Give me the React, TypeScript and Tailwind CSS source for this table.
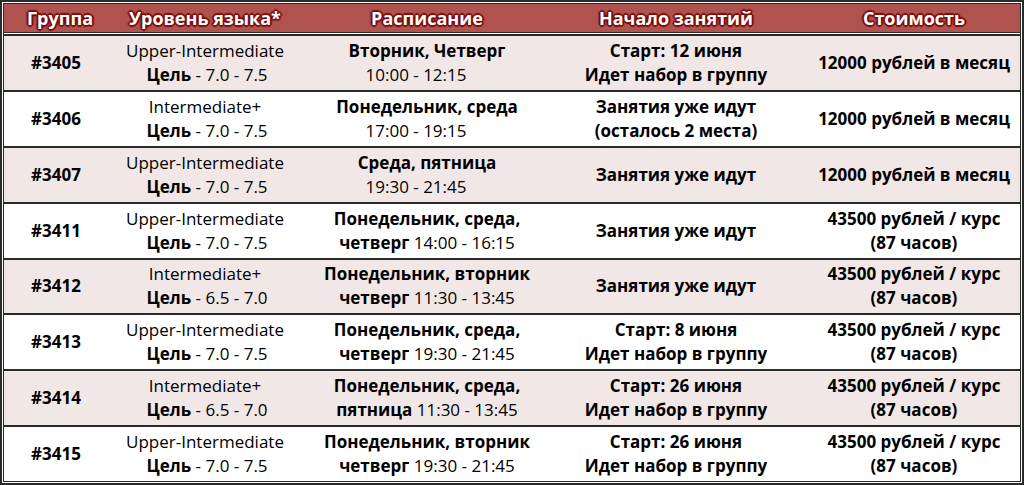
import React from "react";

type Row = {
  id: string;
  level: string;
  goal: string;
  days: string;
  dayWord?: string;
  time: string;
  start: string[];
  price: string[];
};

const rows: Row[] = [
  { id: "#3405", level: "Upper-Intermediate", goal: "7.0 - 7.5", days: "Вторник, Четверг", time: "10:00 - 12:15", start: ["Старт: 12 июня", "Идет набор в группу"], price: ["12000 рублей в месяц"] },
  { id: "#3406", level: "Intermediate+", goal: "7.0 - 7.5", days: "Понедельник, среда", time: "17:00 - 19:15", start: ["Занятия уже идут", "(осталось 2 места)"], price: ["12000 рублей в месяц"] },
  { id: "#3407", level: "Upper-Intermediate", goal: "7.0 - 7.5", days: "Среда, пятница", time: "19:30 - 21:45", start: ["Занятия уже идут"], price: ["12000 рублей в месяц"] },
  { id: "#3411", level: "Upper-Intermediate", goal: "7.0 - 7.5", days: "Понедельник, среда,", dayWord: "четверг", time: "14:00 - 16:15", start: ["Занятия уже идут"], price: ["43500 рублей / курс", "(87 часов)"] },
  { id: "#3412", level: "Intermediate+", goal: "6.5 - 7.0", days: "Понедельник, вторник", dayWord: "четверг", time: "11:30 - 13:45", start: ["Занятия уже идут"], price: ["43500 рублей / курс", "(87 часов)"] },
  { id: "#3413", level: "Upper-Intermediate", goal: "7.0 - 7.5", days: "Понедельник, среда,", dayWord: "четверг", time: "19:30 - 21:45", start: ["Старт: 8 июня", "Идет набор в группу"], price: ["43500 рублей / курс", "(87 часов)"] },
  { id: "#3414", level: "Intermediate+", goal: "6.5 - 7.0", days: "Понедельник, среда,", dayWord: "пятница", time: "11:30 - 13:45", start: ["Старт: 26 июня", "Идет набор в группу"], price: ["43500 рублей / курс", "(87 часов)"] },
  { id: "#3415", level: "Upper-Intermediate", goal: "7.0 - 7.5", days: "Понедельник, вторник", dayWord: "четверг", time: "19:30 - 21:45", start: ["Старт: 26 июня", "Идет набор в группу"], price: ["43500 рублей / курс", "(87 часов)"] },
];

const head =
  "text-white font-bold text-[18px] [text-shadow:1px_0_0_#7d0c0c,-1px_0_0_#7d0c0c,0_1px_0_#7d0c0c,0_-1px_0_#7d0c0c,1px_1px_0_#7d0c0c,-1px_-1px_0_#7d0c0c,1px_-1px_0_#7d0c0c,-1px_1px_0_#7d0c0c,2px_0_1px_#7d0c0c,-2px_0_1px_#7d0c0c,0_2px_1px_#7d0c0c,0_-2px_1px_#7d0c0c]";

const cols = "grid grid-cols-[104px_194px_250px_248px_1fr]";

export default function App() {
  return (
    <div className="w-[1024px] h-[485px] border-2 border-[#2a2a2a] bg-white p-px font-['Open_Sans',sans-serif] text-black">
      <div className="h-full border border-[#2a2a2a] flex flex-col">
        <div className={`${cols} h-[29px] shrink-0 items-center bg-[#b0524e] border-b border-[#2a2a2a]`}>
          <div className={`${head} text-center pl-2`}>Группа</div>
          <div className={`${head} text-center`}>Уровень языка*</div>
          <div className={`${head} text-center`}>Расписание</div>
          <div className={`${head} text-center`}>Начало занятий</div>
          <div className={`${head} text-center pl-2`}>Стоимость</div>
        </div>
        <div className="mt-px border-t-2 border-[#2a2a2a] flex-1 flex flex-col">
          {rows.map((r, i) => (
            <div
              key={r.id}
              className={`${cols} flex-1 items-center text-[17px] leading-6 ${i % 2 === 0 ? "bg-[#f1e7e7]" : "bg-white"} ${i < rows.length - 1 ? "border-b-2 border-[#2a2a2a]" : ""}`}
            >
              <div className="text-center font-bold">{r.id}</div>
              <div className="text-center">
                <div>{r.level}</div>
                <div className="pl-1">
                  <span className="font-bold">Цель</span> - {r.goal}
                </div>
              </div>
              <div className="text-center">
                <div className="font-bold">{r.days}</div>
                {r.dayWord ? (
                  <div>
                    <span className="font-bold">{r.dayWord}</span> {r.time}
                  </div>
                ) : (
                  <div className="pr-[22px]">{r.time}</div>
                )}
              </div>
              <div className="text-center font-bold">
                {r.start.map((s) => (
                  <div key={s}>{s}</div>
                ))}
              </div>
              <div className="text-center font-bold pl-2">
                {r.price.map((s) => (
                  <div key={s}>{s}</div>
                ))}
              </div>
            </div>
          ))}
        </div>
      </div>
    </div>
  );
}
